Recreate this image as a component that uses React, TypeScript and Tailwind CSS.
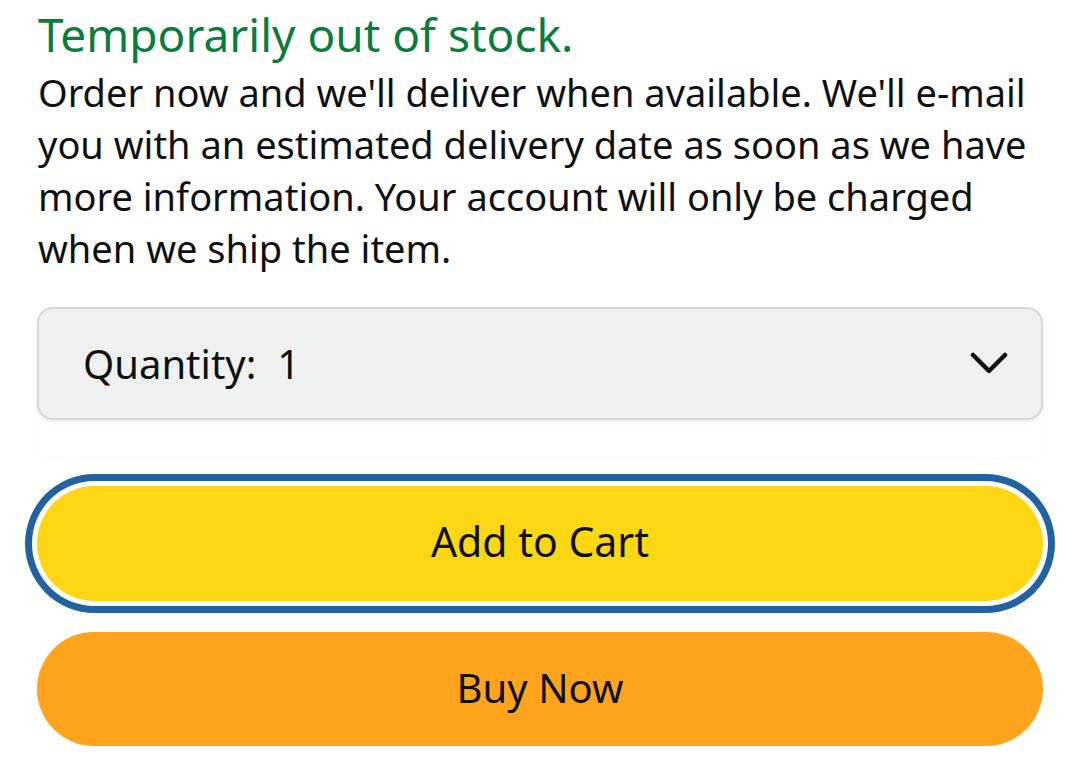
import React from "react";

export default function App() {
  return (
    <div className="w-[1080px] h-[757px] bg-white overflow-hidden text-[#0f1111]" style={{ fontFamily: '"Noto Sans", "Open Sans", sans-serif' }}>
      <div className="pl-[38px] pr-[30px] pt-[4px]">
        <div className="text-[46px] leading-[60px] text-[#0a7c3e]">Temporarily out of stock.</div>
        <p className="text-[38px] leading-[52px] mt-[2px]">
          Order now and we'll deliver when available. We'll e-mail you with an estimated delivery date as soon as we have more information. Your account will only be charged when we ship the item.
        </p>
      </div>
      <div className="px-[37px] mt-[33px]">
        <div className="h-[113px] rounded-[16px] border-2 border-[#d5d9d9] bg-[#f0f2f2] flex items-center justify-between pl-[44px] pr-[33px] shadow-[0_2px_5px_rgba(15,17,17,0.08)]">
          <span className="text-[40px]">Quantity:&nbsp; 1</span>
          <svg width="38" height="26" viewBox="0 0 38 26" fill="none">
            <path d="M3 4 L19 20 L35 4" stroke="#0f1111" strokeWidth="4.5" strokeLinecap="round" strokeLinejoin="round" />
          </svg>
        </div>
        <div className="h-[38px] mx-[2px] rounded-b-[8px] shadow-[0_1px_3px_rgba(0,0,0,0.03)]" />
        <div className="mt-[28px] h-[115px] rounded-full bg-[#fdd614] flex items-center justify-center shadow-[0_0_0_5px_#ffffff,0_0_0_12px_#2162a1]">
          <span className="text-[41px] mt-[-3px]">Add to Cart</span>
        </div>
        <div className="mt-[31px] h-[114px] rounded-full bg-[#ffa41c] flex items-center justify-center">
          <span className="text-[40px] mt-[-2px]">Buy Now</span>
        </div>
      </div>
    </div>
  );
}
